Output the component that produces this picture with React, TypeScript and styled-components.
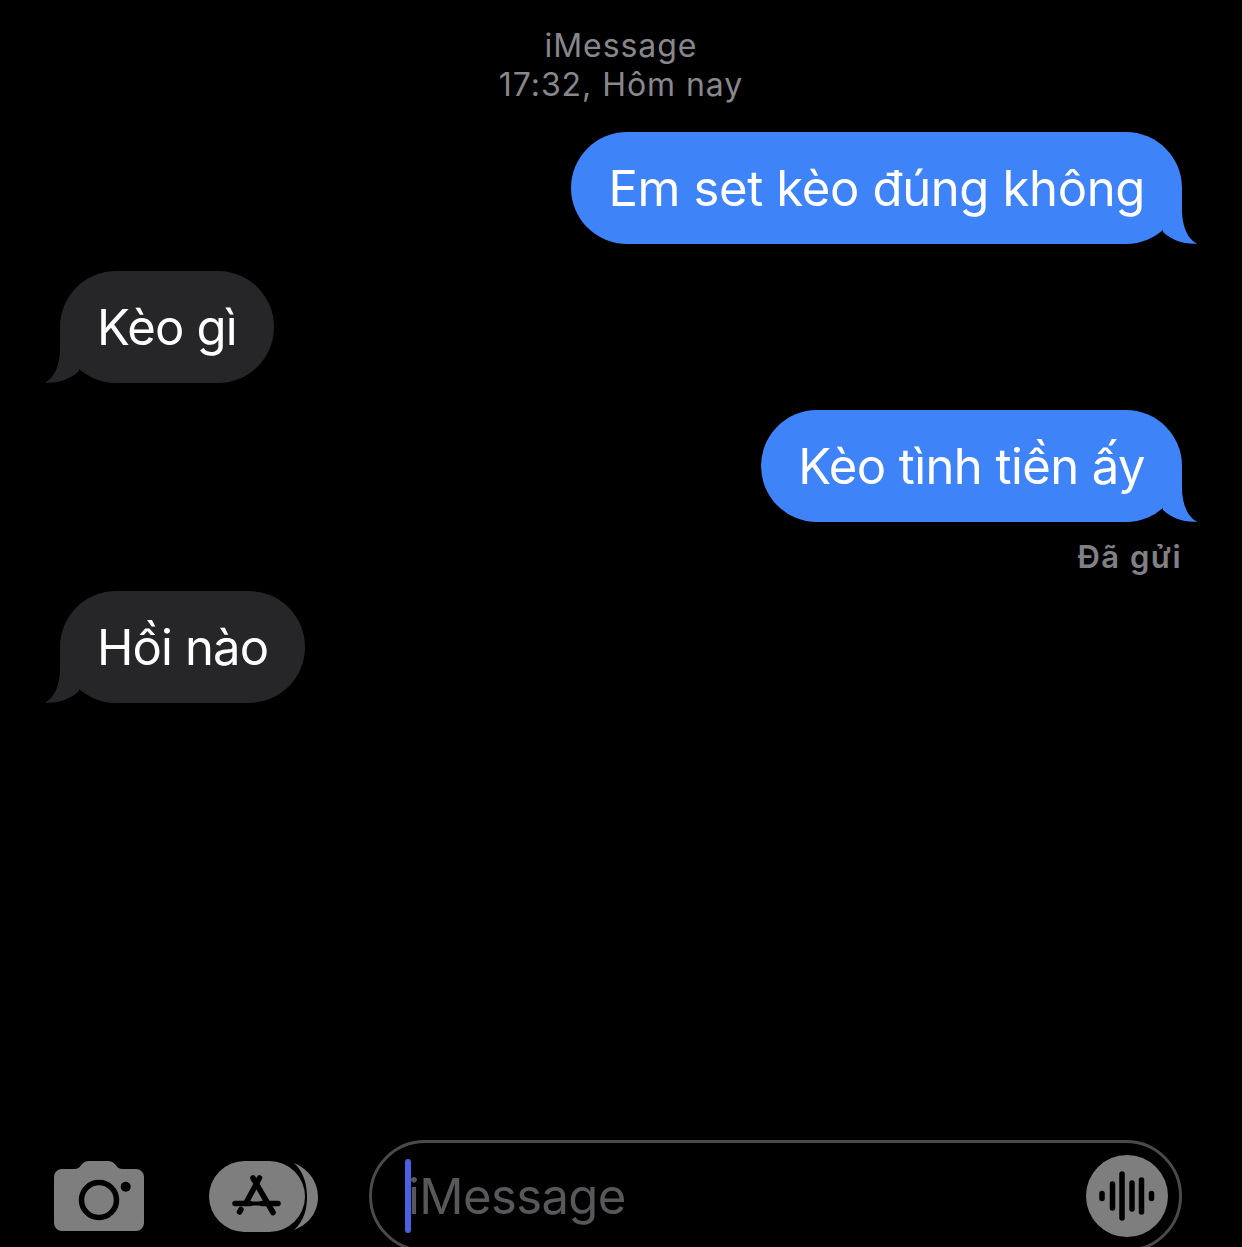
import React from 'react';
import styled, { createGlobalStyle } from 'styled-components';

const GlobalStyle = createGlobalStyle`
  html, body {
    margin: 0;
    padding: 0;
    background: #000000;
  }
`;

const Page = styled.div`
  width: 1242px;
  height: 1247px;
  overflow: hidden;
  display: flex;
  flex-direction: column;
  background: #000000;
  font-family: Inter, 'Liberation Sans', sans-serif;
`;

const Thread = styled.div`
  flex: 1;
  display: flex;
  flex-direction: column;
  padding: 26px 60px 0;
`;

const Header = styled.div`
  text-align: center;
  font-size: 32px;
  line-height: 39px;
  letter-spacing: 0.95px;
  color: #87878c;
  margin-bottom: 28px;
`;

const Row = styled.div<{ $out?: boolean; $gap: number }>`
  display: flex;
  justify-content: ${(p) => (p.$out ? 'flex-end' : 'flex-start')};
  margin-bottom: ${(p) => p.$gap}px;
`;

const Bubble = styled.div<{ $out?: boolean; $track: number }>`
  position: relative;
  height: 112px;
  box-sizing: border-box;
  padding: 0 37px;
  display: flex;
  align-items: center;
  border-radius: 56px;
  font-size: 49px;
  letter-spacing: ${(p) => p.$track}px;
  white-space: nowrap;
  color: #ffffff;
  background: ${(p) => (p.$out ? '#3f83f8' : '#262628')};
`;

const Tail = styled.svg<{ $out?: boolean }>`
  position: absolute;
  bottom: 0;
  width: 40px;
  height: 56px;
  ${(p) => (p.$out ? 'right: -16px;' : 'left: -16px; transform: scaleX(-1);')}
`;

const Status = styled.div`
  text-align: right;
  font-size: 31px;
  font-weight: 600;
  line-height: 36px;
  letter-spacing: 1.5px;
  color: #808085;
  margin: 17px 0 16px;
`;

const Composer = styled.div`
  flex-shrink: 0;
  display: flex;
  align-items: center;
  height: 112px;
  margin-bottom: -5px;
  padding: 0 60px 0 54px;
`;

const CameraIcon = styled.svg`
  width: 90px;
  height: 70px;
  margin-right: 65px;
  flex-shrink: 0;
`;

const StoreIcon = styled.svg`
  width: 110px;
  height: 72px;
  margin-right: 51px;
  flex-shrink: 0;
`;

const InputPill = styled.div`
  position: relative;
  flex: 1;
  height: 112px;
  box-sizing: border-box;
  border: 3px solid #4a4a4c;
  border-radius: 56px;
  display: flex;
  align-items: center;
  justify-content: space-between;
  padding: 0 11px 0 36px;
  margin-left: -1px;
`;

const Placeholder = styled.span`
  font-size: 49px;
  letter-spacing: -0.6px;
  color: #58585b;
`;

const Caret = styled.div`
  position: absolute;
  left: 33px;
  top: 16px;
  width: 6px;
  height: 74px;
  border-radius: 3px;
  background: #4b5fe3;
`;

const VoiceIcon = styled.svg`
  width: 82px;
  height: 82px;
  flex-shrink: 0;
`;

const BubbleTail = ({ out, fill }: { out?: boolean; fill: string }) => (
  <Tail $out={out} viewBox="0 0 40 56">
    <path d="M24 0 V22 C24 38 30 52 39.5 55.7 C25 56.5 14 52 5 44 L0 0 Z" fill={fill} />
  </Tail>
);

const App = () => {
  return (
    <Page>
      <GlobalStyle />
      <Thread>
        <Header>
          iMessage
          <br />
          17:32, Hôm nay
        </Header>
        <Row $out $gap={27}>
          <Bubble $out $track={-0.35}>
            Em set kèo đúng không
            <BubbleTail out fill="#3f83f8" />
          </Bubble>
        </Row>
        <Row $gap={27}>
          <Bubble $track={-0.78}>
            Kèo gì
            <BubbleTail fill="#262628" />
          </Bubble>
        </Row>
        <Row $out $gap={0}>
          <Bubble $out $track={-0.57}>
            Kèo tình tiền ấy
            <BubbleTail out fill="#3f83f8" />
          </Bubble>
        </Row>
        <Status>Đã gửi</Status>
        <Row $gap={0}>
          <Bubble $track={-0.88}>
            Hồi nào
            <BubbleTail fill="#262628" />
          </Bubble>
        </Row>
      </Thread>
      <Composer>
        <CameraIcon viewBox="0 0 90 70">
          <path
            d="M8 8 H20 C24 8 26 6 28 3 C30 1 32 0 35 0 H54 C57 0 59 1 61 3 C63 6 65 8 69 8 H82 A8 8 0 0 1 90 16 V62 A8 8 0 0 1 82 70 H8 A8 8 0 0 1 0 62 V16 A8 8 0 0 1 8 8 Z"
            fill="#7e7e7e"
          />
          <circle cx="45" cy="39" r="17.5" fill="none" stroke="#000" strokeWidth="5.5" />
          <circle cx="71.7" cy="25.7" r="5" fill="#000" />
        </CameraIcon>
        <StoreIcon viewBox="0 0 110 72">
          <rect x="0" y="1" width="96" height="71" rx="35.5" fill="#7e7e7e" />
          <path d="M85 3 C103 11 109 25 109 37 C109 49 103 63 85 70 C95 61 98 49 98 37 C98 25 95 12 85 3 Z" fill="#7e7e7e" />
          <g stroke="#000" strokeWidth="5.5" strokeLinecap="round" fill="none">
            <path d="M50.5 18 L38 41" />
            <path d="M32 49.5 L30.5 52" />
            <path d="M44 18 L64 52.5" />
            <path d="M26 43.5 H41" />
            <path d="M53 43.5 H69" />
            <path d="M36 43.5 H58" strokeWidth="4" />
          </g>
        </StoreIcon>
        <InputPill>
          <Caret />
          <Placeholder>iMessage</Placeholder>
          <VoiceIcon viewBox="0 0 82 82">
            <circle cx="41" cy="41" r="41" fill="#7e7e7e" />
            <g stroke="#000" strokeWidth="5.5" strokeLinecap="round" fill="none">
              <path d="M16 38.5 V43.5" />
              <path d="M26.5 29 V53" />
              <path d="M36 19 V63" />
              <path d="M46 28 V54" />
              <path d="M55.5 25 V57" />
              <path d="M65.5 38.5 V43.5" />
            </g>
          </VoiceIcon>
        </InputPill>
      </Composer>
    </Page>
  );
};

export default App;
